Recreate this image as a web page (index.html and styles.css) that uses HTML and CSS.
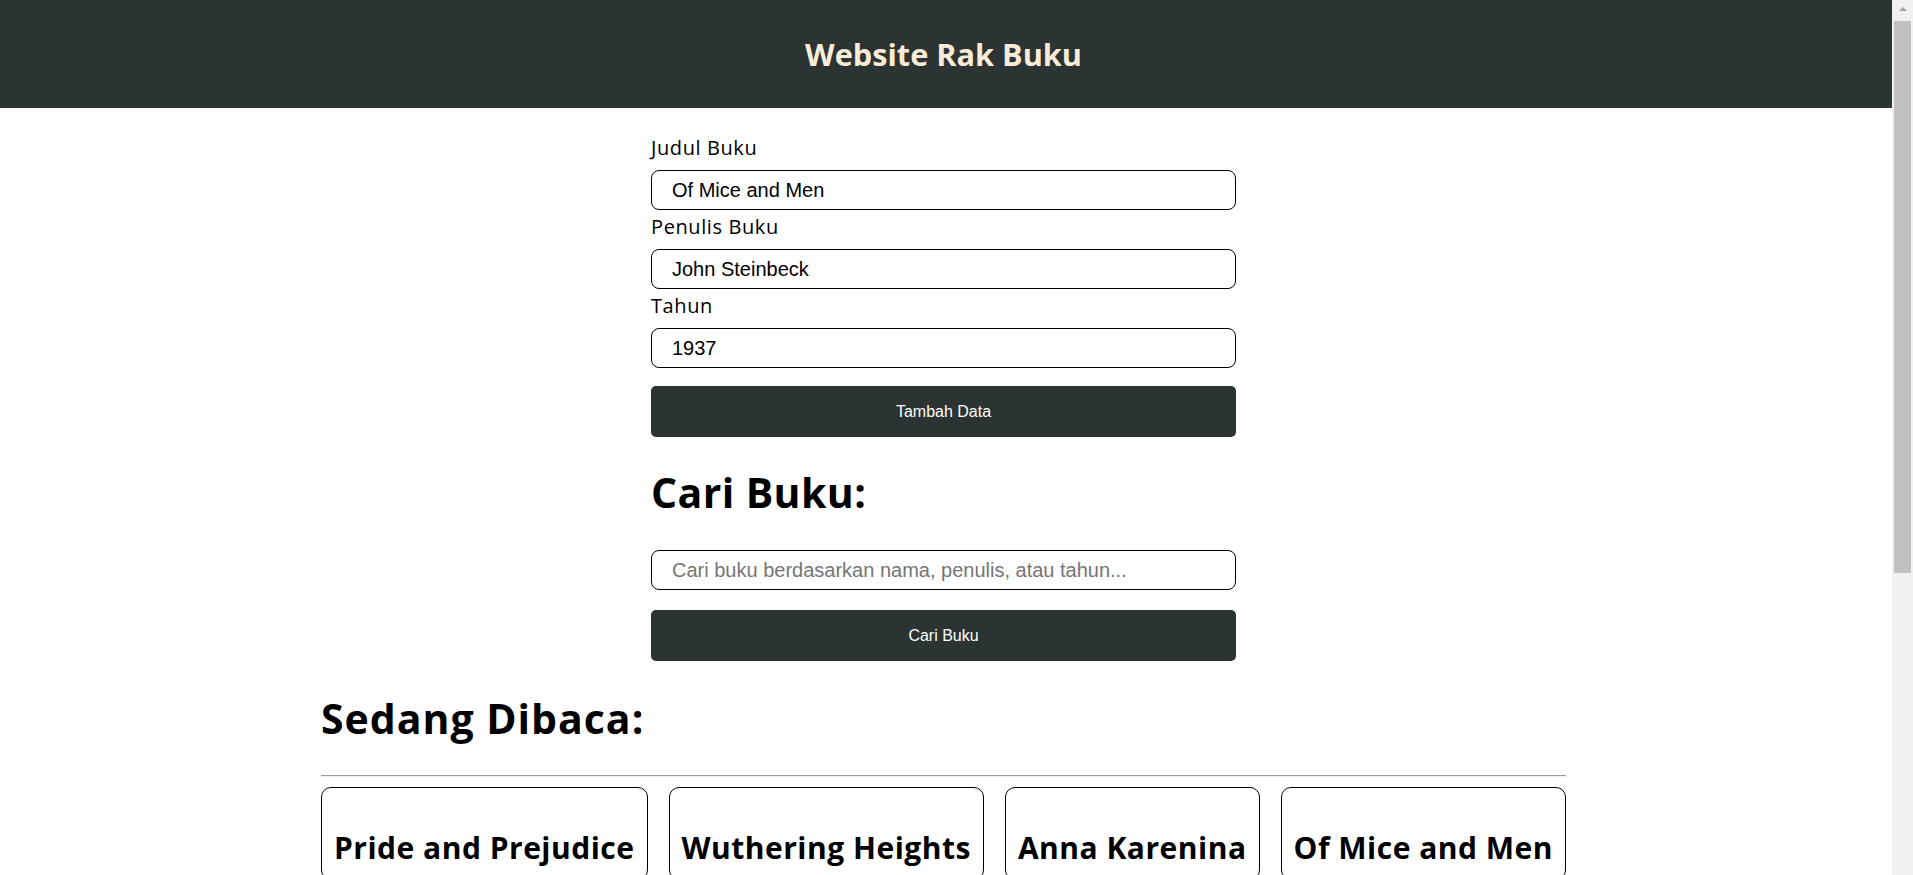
FILE: index.html
```html
<!DOCTYPE html>
<html lang="id">
<head>
<meta charset="utf-8">
<title>Website Rak Buku</title>
<link rel="stylesheet" href="styles.css">
</head>
<body>
<header class="topbar">
  <h1 class="brand">Website Rak Buku</h1>
</header>
<main class="page">
  <section class="form-area">
    <form class="book-form">
      <label class="field-label" for="judul">Judul Buku</label>
      <input class="field-input" id="judul" type="text" value="Of Mice and Men">
      <label class="field-label" for="penulis">Penulis Buku</label>
      <input class="field-input" id="penulis" type="text" value="John Steinbeck">
      <label class="field-label" for="tahun">Tahun</label>
      <input class="field-input" id="tahun" type="text" value="1937">
      <button class="btn" type="button">Tambah Data</button>
    </form>
    <h2 class="section-title search-title">Cari Buku:</h2>
    <input class="field-input" type="text" placeholder="Cari buku berdasarkan nama, penulis, atau tahun...">
    <button class="btn search-btn" type="button">Cari Buku</button>
  </section>
  <section class="shelf">
    <h2 class="section-title shelf-title">Sedang Dibaca:</h2>
    <hr class="divider">
    <div class="book-list">
      <article class="book-card"><h3 class="book-title">Pride and Prejudice</h3></article>
      <article class="book-card"><h3 class="book-title">Wuthering Heights</h3></article>
      <article class="book-card"><h3 class="book-title">Anna Karenina</h3></article>
      <article class="book-card"><h3 class="book-title">Of Mice and Men</h3></article>
    </div>
  </section>
</main>
<div class="scrollbar" aria-hidden="true">
  <div class="scroll-arrow"></div>
  <div class="scroll-thumb"></div>
</div>
</body>
</html>
```
FILE: styles.css
```css
* {
  box-sizing: border-box;
}

body {
  margin: 0;
  background: #ffffff;
  color: #000000;
  font-family: "Open Sans", "DejaVu Sans", sans-serif;
}

.topbar {
  height: 108px;
  padding-right: 26px;
  background: #2c3333;
  display: flex;
  align-items: center;
  justify-content: center;
}

.brand {
  margin: 0;
  color: #faebd7;
  font-size: 30.7px;
  font-weight: 700;
  line-height: 40px;
}

.page {
  padding-top: 23px;
  padding-bottom: 40px;
  padding-right: 26px;
}

.form-area {
  width: 585px;
  margin: 0 auto;
  display: flex;
  flex-direction: column;
}

.book-form {
  display: flex;
  flex-direction: column;
}

.field-label {
  display: block;
  font-size: 20px;
  letter-spacing: 0.6px;
  line-height: 34px;
  margin-bottom: 5px;
}

.field-input {
  display: block;
  width: 100%;
  height: 40px;
  margin: 0;
  padding: 0 20px;
  border: 1px solid #000000;
  border-radius: 8px;
  font-family: "Liberation Sans", Arial, sans-serif;
  font-size: 20px;
  color: #000000;
  background: #ffffff;
}

.field-input::placeholder {
  color: #757575;
}

.btn {
  display: block;
  width: 100%;
  height: 51px;
  margin-top: 18px;
  border: none;
  border-radius: 5px;
  background: #2c3333;
  color: #ffffff;
  font-family: "Liberation Sans", Arial, sans-serif;
  font-size: 16px;
}

.search-btn {
  margin-top: 20px;
}

.section-title {
  margin: 0;
  font-size: 41px;
  font-weight: 700;
  letter-spacing: 0.4px;
  line-height: 60px;
}

.search-title {
  margin-top: 25px;
  margin-bottom: 28px;
}

.shelf {
  width: fit-content;
  margin: 27px auto 0;
}

.shelf-title {
  letter-spacing: 1px;
}

.divider {
  margin: 27px 0 10px;
  border: none;
  border-top: 1px solid #9a9a9a;
  border-bottom: 1px solid #eeeeee;
}

.book-list {
  display: flex;
  gap: 21px;
}

.book-card {
  border: 1px solid #000000;
  border-radius: 10px;
  padding: 10px 12px;
}

.book-title {
  margin: 28px 0 0;
  font-size: 30px;
  font-weight: 700;
  letter-spacing: 0.5px;
  line-height: 43px;
  white-space: nowrap;
}

.scrollbar {
  position: fixed;
  top: 0;
  right: 0;
  width: 21px;
  height: 100vh;
  background: #f1f1f1;
  display: flex;
  flex-direction: column;
  align-items: center;
}

.scroll-arrow {
  margin-top: 7px;
  width: 0;
  height: 0;
  border-left: 4px solid transparent;
  border-right: 4px solid transparent;
  border-bottom: 4px solid #a3a3a3;
}

.scroll-thumb {
  margin-top: 10px;
  width: 17px;
  height: 552px;
  background: #c1c1c1;
}
```
